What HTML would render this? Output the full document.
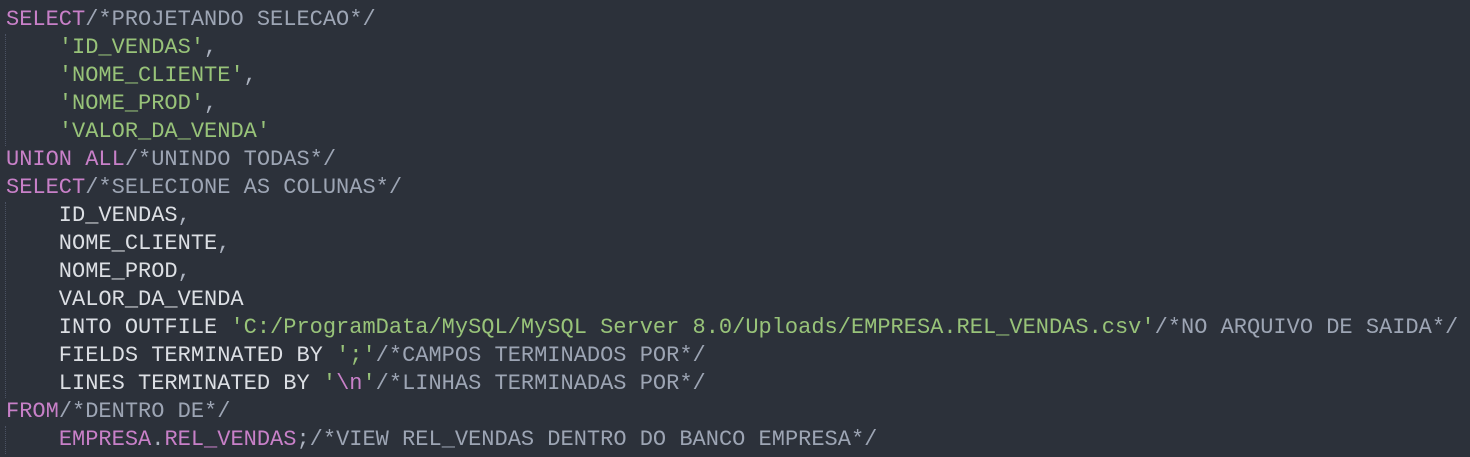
<!DOCTYPE html>
<html><head><style>
html,body{margin:0;padding:0;background:#2c313a;width:1470px;height:457px;overflow:hidden}
pre{margin:0;position:absolute;left:6px;top:6px;font-family:"Liberation Mono",monospace;font-size:22px;line-height:28px;color:#dcdfe4;letter-spacing:0}
.k{color:#c880c8}.c{color:#9da5b4}.s{color:#98c379}.p{color:#abb2bf}
.g{position:absolute;left:5px;width:0;border-left:1px dotted #4b5263}
</style></head><body>
<div class="g" style="top:34px;height:112px"></div>
<div class="g" style="top:202px;height:196px"></div>
<div class="g" style="top:426px;height:28px"></div>
<pre><span class="k">SELECT</span><span class="c">/*PROJETANDO SELECAO*/</span>
    <span class="s">'ID_VENDAS'</span><span class="p">,</span>
    <span class="s">'NOME_CLIENTE'</span><span class="p">,</span>
    <span class="s">'NOME_PROD'</span><span class="p">,</span>
    <span class="s">'VALOR_DA_VENDA'</span>
<span class="k">UNION ALL</span><span class="c">/*UNINDO TODAS*/</span>
<span class="k">SELECT</span><span class="c">/*SELECIONE AS COLUNAS*/</span>
    ID_VENDAS<span class="p">,</span>
    NOME_CLIENTE<span class="p">,</span>
    NOME_PROD<span class="p">,</span>
    VALOR_DA_VENDA
    INTO OUTFILE <span class="s">'C:/ProgramData/MySQL/MySQL Server 8.0/Uploads/EMPRESA.REL_VENDAS.csv'</span><span class="c">/*NO ARQUIVO DE SAIDA*/</span>
    FIELDS TERMINATED BY <span class="s">';'</span><span class="c">/*CAMPOS TERMINADOS POR*/</span>
    LINES TERMINATED BY <span class="s">'<span class="k">\n</span>'</span><span class="c">/*LINHAS TERMINADAS POR*/</span>
<span class="k">FROM</span><span class="c">/*DENTRO DE*/</span>
    <span class="k">EMPRESA</span><span class="p">.</span><span class="k">REL_VENDAS</span><span class="p">;</span><span class="c">/*VIEW REL_VENDAS DENTRO DO BANCO EMPRESA*/</span></pre>
</body></html>
